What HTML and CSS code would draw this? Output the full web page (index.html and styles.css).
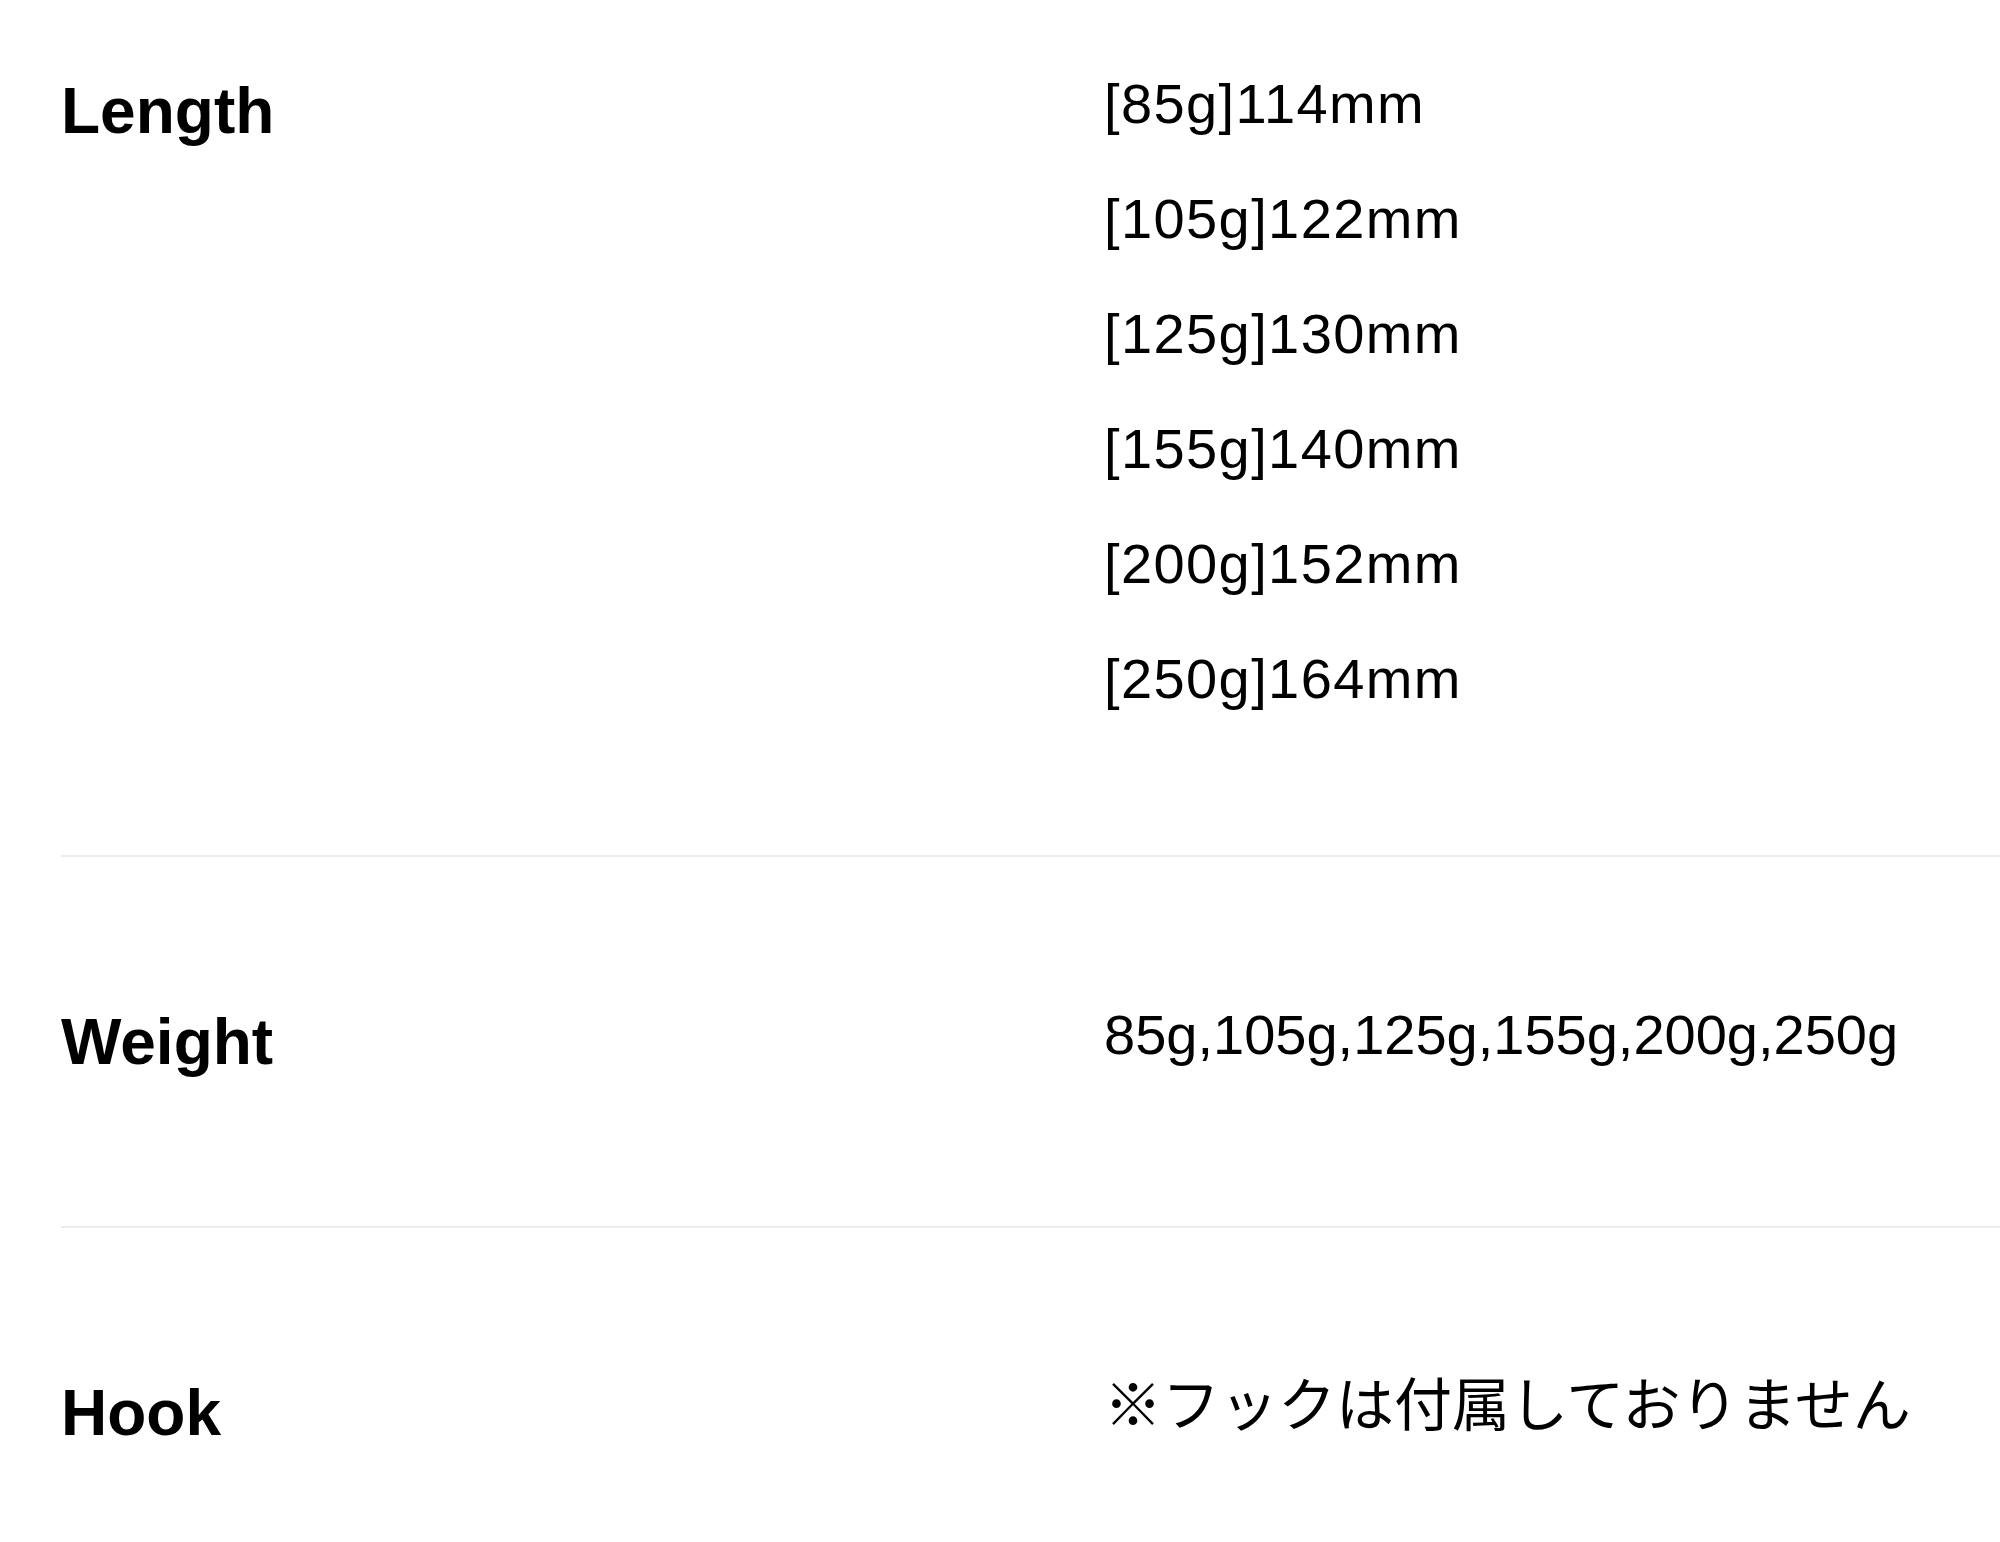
FILE: index.html
```html
<!DOCTYPE html>
<html lang="ja">
<head>
    <meta charset="UTF-8">
    <meta name="viewport" content="width=device-width, initial-scale=1.0">
    <title>Spec</title>
    <link rel="stylesheet" href="styles.css">
</head>
<body>
    <div class="spec">
        <dl class="spec-row">
            <dt class="spec-label">Length</dt>
            <dd class="spec-value">
                <p class="size">[85g]114mm</p>
                <p class="size">[105g]122mm</p>
                <p class="size">[125g]130mm</p>
                <p class="size">[155g]140mm</p>
                <p class="size">[200g]152mm</p>
                <p class="size">[250g]164mm</p>
            </dd>
        </dl>
        <dl class="spec-row">
            <dt class="spec-label">Weight</dt>
            <dd class="spec-value">
                <p>85g,105g,125g,155g,200g,250g</p>
            </dd>
        </dl>
        <dl class="spec-row">
            <dt class="spec-label">Hook</dt>
            <dd class="spec-value">
                <p class="note">※フックは付属しておりません</p>
            </dd>
        </dl>
    </div>
</body>
</html>
```

FILE: styles.css
```css
body {
    margin: 0;
    background-color: #fff;
    color: #000;
    font-family: "Liberation Sans", "Noto Sans CJK JP", sans-serif;
}

.spec {
    padding-left: 61px;
}

/* one row per spec item, thin grey rule between */
.spec-row {
    display: flex;
    margin: 0;
    padding: 120px 0 119px;
    border-bottom: 2px solid #ececec;
}
.spec-row:first-child {
    padding-top: 46px;
}
.spec-row:last-child {
    border-bottom: none;
}

.spec-label {
    width: 1043px;
    flex-shrink: 0;
    font-size: 64px;
    font-weight: bold;
    line-height: 130px;
}

.spec-value {
    margin: 0;
    font-size: 56px;
    line-height: 115px;
}
.spec-value p {
    margin: 0;
}
.spec-value .size {
    letter-spacing: 1.4px;
}
.spec-value .note {
    font-size: 58px;
}
```
